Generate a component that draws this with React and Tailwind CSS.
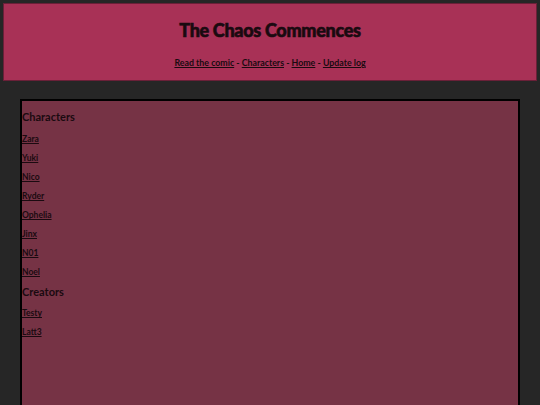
const characters = ['Zara', 'Yuki', 'Nico', 'Ryder', 'Ophelia', 'Jinx', 'N01', 'Noel'];
const creators = ['Testy', 'Latt3'];

const navLinks = ['Read the comic', 'Characters', 'Home', 'Update log'];

function LinkRow({ name }) {
    return (
        <div className="h-[19px] leading-[15px]">
            <a href="#" className="underline text-[8.5px] font-bold text-[#1a0a10]">{name}</a>
        </div>
    );
}

function SectionTitle({ children, className = '' }) {
    return (
        <h3 className={`h-[22px] leading-[22px] text-[11px] font-bold text-[#1a0a10] ${className}`}>{children}</h3>
    );
}

export default function App() {
    return (
        <div className="h-[405px] bg-[#262626] pt-[3px] px-[3px] overflow-hidden" style={{ fontFamily: 'Lato, "Liberation Sans", sans-serif' }}>
            <header className="h-[78px] bg-[#a83156] border border-[#6a2038] flex flex-col items-center">
                <h1 className="mt-[15px] text-[18px] leading-[22px] font-black text-[#1a0a10] tracking-[-0.3px] [-webkit-text-stroke:0.6px_#1a0a10]">
                    The Chaos Commences
                </h1>
                <nav className="mt-[16px] text-[8.8px] leading-[12px] font-bold text-[#1a0a10]">
                    {navLinks.map((l, i) => (
                        <span key={l}>
                            {i > 0 && <span> - </span>}
                            <a href="#" className="underline">{l}</a>
                        </span>
                    ))}
                </nav>
            </header>

            <main className="mx-[17px] mt-[18px] h-[330px] bg-[#763345] border-2 border-black pt-[5px]">
                <SectionTitle>Characters</SectionTitle>
                {characters.map(c => <LinkRow key={c} name={c} />)}
                <SectionTitle className="pt-px">Creators</SectionTitle>
                {creators.map(c => <LinkRow key={c} name={c} />)}
            </main>
        </div>
    );
}
